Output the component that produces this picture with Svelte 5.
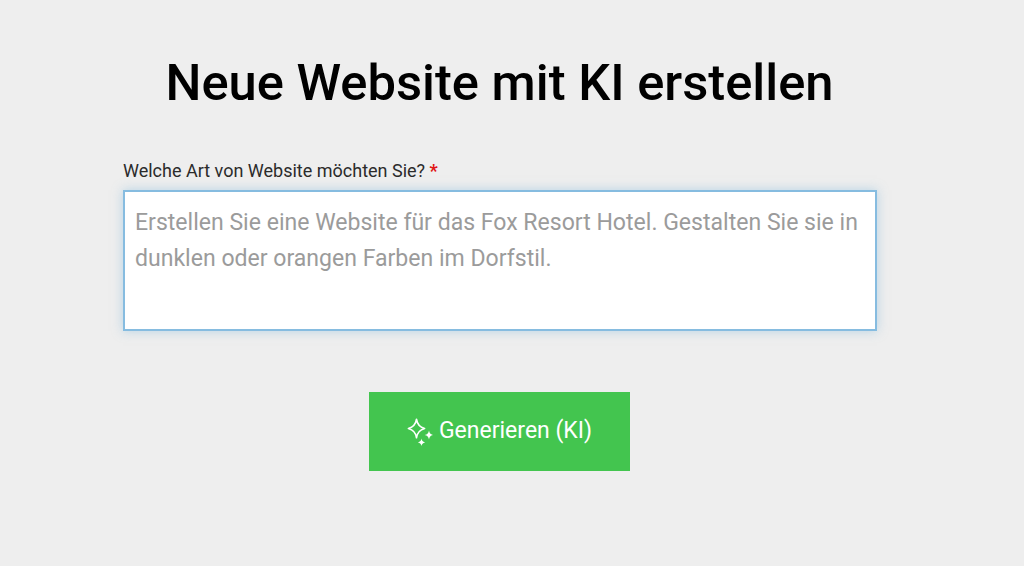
<script>
  let prompt = $state('');
</script>

<main class="page">
  <h1>Neue Website mit KI erstellen</h1>
  <form class="form" onsubmit={(e) => e.preventDefault()}>
    <label class="label" for="prompt">Welche Art von Website möchten Sie? <span class="req">*</span></label>
    <textarea
      id="prompt"
      bind:value={prompt}
      placeholder="Erstellen Sie eine Website für das Fox Resort Hotel. Gestalten Sie sie in dunklen oder orangen Farben im Dorfstil."
    ></textarea>
    <button type="submit">
      <svg width="26" height="28" viewBox="0 0 26 28" aria-hidden="true">
        <path class="outline" d="M9.5 1.2 C10.2 6.4 12.2 9 17.6 10.5 C12.2 12 10.2 14.6 9.5 19.8 C8.8 14.6 6.8 12 1.4 10.5 C6.8 9 8.8 6.4 9.5 1.2 Z" />
        <path class="solid" d="M22 12.4 C22.5 15.2 23.5 16.3 26.4 17 C23.5 17.7 22.5 18.8 22 21.6 C21.5 18.8 20.5 17.7 17.6 17 C20.5 16.3 21.5 15.2 22 12.4 Z" />
        <path class="solid" d="M14.5 20.6 C14.9 23 15.7 23.8 18.1 24.4 C15.7 25 14.9 25.8 14.5 28 C14.1 25.8 13.3 25 10.9 24.4 C13.3 23.8 14.1 23 14.5 20.6 Z" />
      </svg>
      <span>Generieren (KI)</span>
    </button>
  </form>
</main>

<style>
  :global(body) {
    margin: 0;
    background: #eeeeee;
    font-family: Roboto, "Liberation Sans", sans-serif;
  }
  .page {
    height: 566px;
    box-sizing: border-box;
    padding: 53px 148px 0 123px;
    overflow: hidden;
  }
  h1 {
    margin: 0;
    height: 60px;
    font-size: 50.7px;
    line-height: 60px;
    font-weight: 500;
    color: #000;
    text-align: center;
  }
  .form {
    display: flex;
    flex-direction: column;
    margin-top: 47px;
  }
  .label {
    font-size: 18px;
    line-height: 22px;
    color: #2b2b2b;
    margin-bottom: 8px;
  }
  .req {
    color: #e01515;
    font-weight: 700;
  }
  textarea {
    display: block;
    box-sizing: border-box;
    width: 754px;
    height: 141px;
    padding: 13px 10px;
    border: 2px solid #86bce0;
    border-radius: 0;
    outline: none;
    resize: none;
    background: #fff;
    box-shadow: 0 0 10px rgba(125, 184, 220, 0.5);
    font-family: inherit;
    font-size: 23.06px;
    line-height: 36px;
    color: #333;
  }
  textarea::placeholder {
    color: #9b9b9b;
    opacity: 1;
  }
  button {
    align-self: center;
    display: flex;
    align-items: center;
    justify-content: center;
    gap: 6px;
    width: 261px;
    height: 79px;
    margin-top: 61px;
    padding: 0;
    border: 0;
    background: #43c54f;
    color: #fff;
    font-family: inherit;
    font-size: 23px;
    cursor: pointer;
  }
  button span {
    position: relative;
    top: -1px;
  }
  .outline {
    fill: none;
    stroke: #fff;
    stroke-width: 1.6;
    stroke-linejoin: round;
  }
  .solid {
    fill: #fff;
  }
</style>
